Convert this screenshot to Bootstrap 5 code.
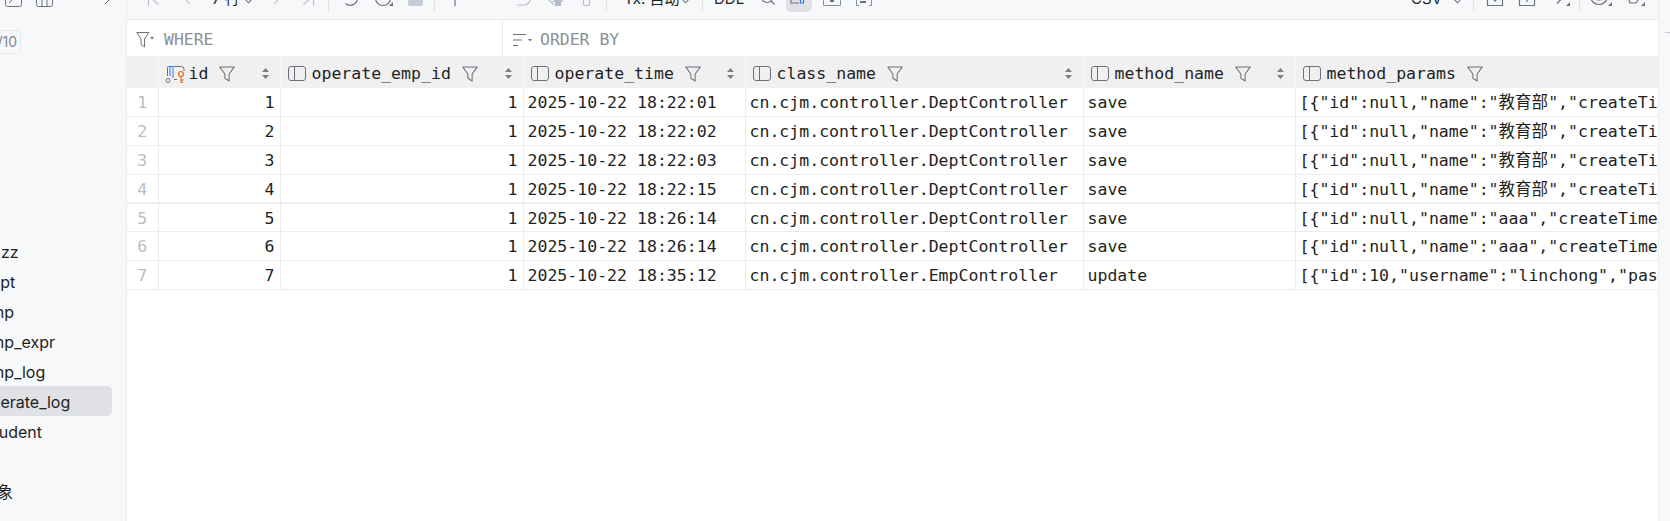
<!DOCTYPE html>
<html lang="en">
<head>
    <meta charset="UTF-8">
    <meta name="viewport" content="width=device-width, initial-scale=1.0">
    <title>operate_log</title>
    <link href="https://cdn.jsdelivr.net/npm/bootstrap@5.3.0/dist/css/bootstrap.min.css" rel="stylesheet">
    <style>
        html, body { height: 100%; overflow: hidden; }
        body { background: #fff; color: #1e1f22; font-family: Inter, "Noto Sans CJK SC", sans-serif; }
        svg { display: block; flex: none; overflow: visible; }

        /* shell */
        .side-pane { width: 127px; background: #f7f8fa; border-right: 1px solid #ebecf0; overflow: hidden; }
        .main-pane { width: 1531px; }
        .rail-pane { width: 12px; background: #f7f8fa; border-left: 1px solid #ebecf0; }
        .rail-tick { width: 6px; height: 1px; background: #c9ccd6; margin: 32px 0 0 6px; }

        /* clipped toolbar along the top */
        .tool-bar { height: 20px; background: #f7f8fa; border-bottom: 1px solid #ebecf0; overflow: hidden; align-items: flex-end; }
        .side-pane .tool-bar { border-bottom: 0; }
        .tool { display: flex; justify-content: center; padding-bottom: 13px; flex: none; }
        .tool.tool-chev { padding-bottom: 15px; }
        .tool-text { font-size: 15px; line-height: 18px; padding-bottom: 11px; flex: none; }
        .tool-sep { width: 1px; height: 12px; background: #dfe1e5; margin-bottom: 8px; flex: none; }
        .tool.tool-on { background: #dfe1e5; border-radius: 5px; padding-bottom: 8px; height: 30px; align-items: flex-end; margin-bottom: 7px; }
        .tw23 { width: 23px; } .tw24 { width: 24px; } .tw26 { width: 26px; }
        .tw31 { width: 31px; } .tw32 { width: 32px; } .tw33 { width: 33px; } .tw34 { width: 34px; }
        .tw37 { width: 37px; } .tw39 { width: 39px; } .tw40 { width: 40px; } .tw41 { width: 41px; }
        .tw42 { width: 42px; } .tw45 { width: 45px; }
        .tool-lead { padding-left: 10px; }
        .tool-right { padding-right: 10px; }
        .txt-rows { margin-left: 9px; width: 20px; white-space: nowrap; }
        .txt-tx { margin-left: 17px; width: 45px; white-space: nowrap; }
        .txt-ddl { margin-left: 11px; width: 27px; }
        .tool-search { justify-content: flex-end; padding-right: 11px; }
        .side-tools .tool:first-child { margin-left: 5px; width: 17px; }
        .side-tools .tool:nth-child(2) { margin-left: 14px; width: 17px; }
        .side-tools .tool:nth-child(3) { margin-left: 52px; width: 5px; }

        /* sidebar */
        .page-count { width: 41px; height: 24px; margin: 10px 0 0 -20px; border: 1px solid #e6e7eb; border-radius: 4px; color: #818594; font-size: 14px; line-height: 22px; text-align: right; padding-right: 3px; }
        .tree-list { margin-top: 182px; }
        .tree-row { height: 30px; line-height: 32px; font-size: 16px; white-space: nowrap; width: 112px; overflow: hidden; border-radius: 0 5px 5px 0; }
        .tree-row.is-on { background: #dfe1e5; }
        .cut-0 { margin-left: 1px; } .cut-emp { margin-left: -19px; } .cut-dept { margin-left: -19px; }
        .cut-op { margin-left: -19px; } .cut-st { margin-left: -15px; } .cut-cn { margin-left: -19px; }
        .tree-gap { height: 30px; }

        /* where / order by */
        .filter-bar { height: 36px; font-family: "DejaVu Sans Mono", "Noto Sans CJK SC", monospace; font-size: 16.45px; color: #8c8f96; }
        .filter-where { width: 376px; border-right: 1px solid #ebecf0; padding: 3px 0 0 9px; gap: 10px; }
        .filter-order { padding: 3px 0 0 10px; gap: 8px; }
        .filter-bar span { padding-top: 2px; }

        /* grid */
        .grid-wrap { overflow: hidden; width: 1531px; }
        .log-grid { table-layout: fixed; width: 1531px; margin: 0; font-family: "DejaVu Sans Mono", "Noto Sans CJK SC", monospace; font-size: 16.55px; border-collapse: collapse; }
        .log-grid th, .log-grid td { padding: 3px 5px 0 4px; height: 29px; line-height: 20px; border: 0 solid #ebecf0; border-width: 0 1px 1px 0; white-space: nowrap; overflow: hidden; color: #1e1f22; box-shadow: none; vertical-align: middle; font-weight: 400; }
        .log-grid th { height: 32px; background: #f0f0f1; border-color: #f7f7f8; border-bottom: 0; padding: 3px 0 0 7px; }
        .log-grid tbody tr:first-child td { height: 28px; }
        .log-grid tbody tr:nth-child(4) td { border-bottom-width: 2px; }
        .log-grid tbody tr:nth-child(5) td { height: 28px; }
        .log-grid td.row-no { color: #b9bdc9; text-align: center; padding: 3px 0 0; }
        .log-grid th:last-child, .log-grid td:last-child { border-right: 0; }
        .c-no { width: 31px; } .c-id { width: 122px; } .c-emp { width: 243px; } .c-time { width: 222px; }
        .c-class { width: 338px; } .c-method { width: 212px; } .c-params { width: 363px; }
        .head-in { display: flex; align-items: center; }
        .head-in > span { margin-left: 6px; }
        .head-in .head-filter { margin-left: 11px; }
        .head-in .head-sort { margin-left: auto; margin-right: 11px; }
        .head-in.head-id { margin-left: -1px; }
        .head-id > span { margin-left: 3px; }
    </style>
</head>
<body>
<svg width="0" height="0" class="position-absolute">
    <defs>
        <symbol id="i-col" viewBox="0 0 18 15"><rect x=".5" y=".5" width="17" height="14" rx="2.5" fill="none" stroke="#6c707e"/><path d="M6.5 .5v14" stroke="#6c707e" fill="none"/></symbol>
        <symbol id="i-key" viewBox="0 0 21 18">
            <path d="M8.500 1.500h8a2.500 2.500 0 0 1 2.500 2.500v2M9 14.500h3" fill="none" stroke="#6c707e"/>
            <path d="M2.500 11V2.500a1 1 0 0 1 1-1h4.500V13M5 1.500V11" fill="none" stroke="#3574f0"/>
            <circle cx="3" cy="15.500" r="2" fill="none" stroke="#6c707e"/>
            <circle cx="16" cy="9" r="2.500" fill="none" stroke="#e66d17" stroke-width="1.2"/>
            <path d="M16 11.500v6M16 15h3M16 17.500h2" fill="none" stroke="#e66d17" stroke-width="1.2"/>
        </symbol>
        <symbol id="i-funnel" viewBox="0 0 15 15"><path d="M.8 1h13.400L9.500 7.500v6.600L5.500 11.500v-4z" fill="none" stroke="#6c707e" stroke-linejoin="round"/></symbol>
        <symbol id="i-sort" viewBox="0 0 7 11"><path d="M3.500 0L7 4H0zM3.500 11L0 7h7z" fill="#7a7e8a"/></symbol>
        <symbol id="i-chev" viewBox="0 0 10 6"><path d="M1 .8L5 5l4-4.200" fill="none" stroke="#6c707e" stroke-width="1.2"/></symbol>
    </defs>
</svg>

<div class="d-flex h-100">
    <aside class="side-pane flex-shrink-0">
        <div class="tool-bar side-tools d-flex">
            <div class="tool"><svg width="17" height="16" viewBox="0 0 17 16"><rect x=".5" y=".5" width="16" height="15" rx="2" fill="none" stroke="#6c707e"/><path d="M4 12l5-5" stroke="#6c707e"/></svg></div>
            <div class="tool"><svg width="17" height="16" viewBox="0 0 17 16"><rect x=".5" y=".5" width="16" height="15" rx="2" fill="none" stroke="#6c707e"/><path d="M6 .5v15M11 .5v15" stroke="#6c707e"/></svg></div>
            <div class="tool"><svg width="5" height="16" viewBox="0 0 5 16"><path d="M0 13l5-5" fill="none" stroke="#6c707e"/></svg></div>
        </div>
        <div class="page-count">1/10</div>
        <div class="tree-list">
            <div class="tree-row"><div class="cut-0">zz</div></div>
            <div class="tree-row"><div class="cut-dept">dept</div></div>
            <div class="tree-row"><div class="cut-emp">emp</div></div>
            <div class="tree-row"><div class="cut-emp">emp_expr</div></div>
            <div class="tree-row"><div class="cut-emp">emp_log</div></div>
            <div class="tree-row is-on"><div class="cut-op">operate_log</div></div>
            <div class="tree-row"><div class="cut-st">student</div></div>
            <div class="tree-gap"></div>
            <div class="tree-row"><div class="cut-cn">对象</div></div>
        </div>
    </aside>

    <main class="main-pane flex-shrink-0 d-flex flex-column">
        <div class="tool-bar d-flex tool-lead tool-right">
            <div class="tool tw33"><svg width="11" height="16" viewBox="0 0 11 16"><path d="M.5 2v14M10.500 14.500L3 8l7.500-6.500" fill="none" stroke="#b9bdc9" stroke-width="1.1"/></svg></div>
            <div class="tool tw33"><svg width="6" height="16" viewBox="0 0 6 16"><path d="M6 14L0 7.500 6 1" fill="none" stroke="#b9bdc9" stroke-width="1.1"/></svg></div>
            <div class="tool-text txt-rows">7 行</div>
            <div class="tool tool-chev tw33"><svg width="9" height="6"><use href="#i-chev"/></svg></div>
            <div class="tool tw23"><svg width="6" height="16" viewBox="0 0 6 16"><path d="M0 14l6-6.500L0 1" fill="none" stroke="#b9bdc9" stroke-width="1.1"/></svg></div>
            <div class="tool tw40"><svg width="11" height="16" viewBox="0 0 11 16"><path d="M10.500 2v14M.5 14.500L8 8 .5 1.500" fill="none" stroke="#b9bdc9" stroke-width="1.1"/></svg></div>
            <div class="tool-sep"></div>
            <div class="tool tw42"><svg width="16" height="16" viewBox="0 0 16 16"><path d="M3.500 13.500a7 7 0 1 0-1-9" fill="none" stroke="#6c707e" stroke-width="1.2"/></svg></div>
            <div class="tool tw26"><svg width="18" height="16" viewBox="0 0 18 16"><circle cx="8" cy="8" r="7.500" fill="none" stroke="#6c707e" stroke-width="1.2"/><path d="M8 4v5" stroke="#6c707e"/><path d="M18 12v4h-4z" fill="#6c707e"/></svg></div>
            <div class="tool tw37"><svg width="15" height="16" viewBox="0 0 15 16"><rect width="15" height="16" rx="2" fill="#c9ccd6"/></svg></div>
            <div class="tool-sep"></div>
            <div class="tool tw40"><svg width="2" height="16" viewBox="0 0 2 16"><path d="M1 0v16" stroke="#6c707e" stroke-width="1.2"/></svg></div>
            <div class="tool tw32"></div>
            <div class="tool tw34"><svg width="14" height="16" viewBox="0 0 14 16"><path d="M0 15h7a6 6 0 0 0 6-6V0" fill="none" stroke="#b9bdc9" stroke-width="1.2"/></svg></div>
            <div class="tool tw26"><svg width="20" height="16" viewBox="0 0 20 16"><path d="M1 6l9 9" fill="none" stroke="#b9bdc9" stroke-width="1.2"/><path d="M14 7l6 5h-3v4h-6v-4H8z" fill="#b9bdc9"/></svg></div>
            <div class="tool tw39"><svg width="7" height="16" viewBox="0 0 7 16"><path d="M.5 0v14a1.500 1.500 0 0 0 1.500 1.500h3a1.500 1.500 0 0 0 1.500-1.500V0" fill="none" stroke="#b9bdc9" stroke-width="1.2"/></svg></div>
            <div class="tool-sep"></div>
            <div class="tool-text txt-tx">Tx: 自动</div>
            <div class="tool tool-chev tw33"><svg width="9" height="6"><use href="#i-chev"/></svg></div>
            <div class="tool-sep"></div>
            <div class="tool-text txt-ddl">DDL</div>
            <div class="tool tw45 tool-search"><svg width="14" height="16" viewBox="0 0 14 16"><circle cx="6" cy="7" r="5.500" fill="none" stroke="#6c707e" stroke-width="1.2"/><path d="M10 11l3.500 3.500" stroke="#6c707e" stroke-width="1.2"/></svg></div>
            <div class="tool tw26 tool-on"><svg width="18" height="16" viewBox="0 0 18 16"><path d="M1 4v11h8M1 4h10" fill="none" stroke="#6c707e" stroke-width="1.2"/><path d="M6 5h12l-4.500 5v5h-3v-5z" fill="#e3ebfa" stroke="#3574f0" stroke-width="1.2"/></svg></div>
            <div class="tool tw40"><svg width="18" height="16" viewBox="0 0 18 16"><path d="M.5 4v11.500h17V4" fill="none" stroke="#8a8e9b"/><rect x="7" y="9" width="4" height="3" fill="#6c707e"/></svg></div>
            <div class="tool tw24"><svg width="16" height="16" viewBox="0 0 16 16"><path d="M3 15.500H.5V10M13 15.500h2.500V10" fill="none" stroke="#8a8e9b"/><rect x="4" y="11" width="6" height="2" fill="#6c707e"/></svg></div>
            <div class="tool-text ms-auto">CSV</div>
            <div class="tool tool-chev tw31"><svg width="9" height="6"><use href="#i-chev"/></svg></div>
            <div class="tool-sep"></div>
            <div class="tool tw41"><svg width="16" height="16" viewBox="0 0 16 16"><path d="M.5 9v6.500h15V9" fill="none" stroke="#6c707e" stroke-width="1.2"/><path d="M4 7h8l-4 5z" fill="#6c707e"/></svg></div>
            <div class="tool tw24"><svg width="16" height="16" viewBox="0 0 16 16"><path d="M.5 9v6.500h15V9" fill="none" stroke="#6c707e" stroke-width="1.2"/><path d="M8 5v7" stroke="#6c707e" stroke-width="1.2"/></svg></div>
            <div class="tool tw40"><svg width="21" height="16" viewBox="0 0 21 16"><path d="M0 8h13M8 2.500L13.500 8 8 13.500" fill="none" stroke="#6c707e" stroke-width="1.2"/><path d="M21 12v4h-4z" fill="#6c707e"/></svg></div>
            <div class="tool-sep"></div>
            <div class="tool tw42"><svg width="22" height="16" viewBox="0 0 22 16"><circle cx="9" cy="6" r="8.500" fill="none" stroke="#6c707e" stroke-width="1.2"/><circle cx="9" cy="6" r="4" fill="none" stroke="#6c707e" stroke-width="1.2"/><path d="M22 12v4h-4z" fill="#6c707e"/></svg></div>
            <div class="tool tw26"><svg width="20" height="16" viewBox="0 0 20 16"><path d="M1 5l3 5 1 3h6l2-3 3-5" fill="none" stroke="#6c707e" stroke-width="1.2"/><circle cx="8" cy="7" r="2.500" fill="none" stroke="#6c707e" stroke-width="1.2"/><path d="M20 12v4h-4z" fill="#6c707e"/></svg></div>
        </div>

        <div class="filter-bar d-flex">
            <div class="filter-where d-flex align-items-center">
                <svg width="18" height="18" viewBox="0 0 18 18"><path d="M.8 1.500h12L8.500 8v8L5 13.500V8z" fill="none" stroke="#6c707e" stroke-linejoin="round"/><path d="M14 6h4l-2 2.500z" fill="#6c707e"/></svg>
                <span>WHERE</span>
            </div>
            <div class="filter-order flex-grow-1 d-flex align-items-center">
                <svg width="19" height="14" viewBox="0 0 19 14"><path d="M0 1.500h13M0 7h9M0 12.500h5" fill="none" stroke="#6c707e" stroke-width="1.1"/><path d="M15 6h4l-2 2.500z" fill="#6c707e"/></svg>
                <span>ORDER BY</span>
            </div>
        </div>

        <div class="grid-wrap">
            <table class="table log-grid">
                <colgroup>
                    <col class="c-no"><col class="c-id"><col class="c-emp"><col class="c-time"><col class="c-class"><col class="c-method"><col class="c-params">
                </colgroup>
                <thead>
                    <tr>
                        <th></th>
                        <th><div class="head-in head-id"><svg width="21" height="18"><use href="#i-key"/></svg><span>id</span><svg class="head-filter" width="16" height="16"><use href="#i-funnel"/></svg><svg class="head-sort" width="7" height="11"><use href="#i-sort"/></svg></div></th>
                        <th><div class="head-in"><svg width="18" height="15"><use href="#i-col"/></svg><span>operate_emp_id</span><svg class="head-filter" width="16" height="16"><use href="#i-funnel"/></svg><svg class="head-sort" width="7" height="11"><use href="#i-sort"/></svg></div></th>
                        <th><div class="head-in"><svg width="18" height="15"><use href="#i-col"/></svg><span>operate_time</span><svg class="head-filter" width="16" height="16"><use href="#i-funnel"/></svg><svg class="head-sort" width="7" height="11"><use href="#i-sort"/></svg></div></th>
                        <th><div class="head-in"><svg width="18" height="15"><use href="#i-col"/></svg><span>class_name</span><svg class="head-filter" width="16" height="16"><use href="#i-funnel"/></svg><svg class="head-sort" width="7" height="11"><use href="#i-sort"/></svg></div></th>
                        <th><div class="head-in"><svg width="18" height="15"><use href="#i-col"/></svg><span>method_name</span><svg class="head-filter" width="16" height="16"><use href="#i-funnel"/></svg><svg class="head-sort" width="7" height="11"><use href="#i-sort"/></svg></div></th>
                        <th><div class="head-in"><svg width="18" height="15"><use href="#i-col"/></svg><span>method_params</span><svg class="head-filter" width="16" height="16"><use href="#i-funnel"/></svg></div></th>
                    </tr>
                </thead>
                <tbody>
                    <tr><td class="row-no">1</td><td class="text-end">1</td><td class="text-end">1</td><td>2025-10-22 18:22:01</td><td>cn.cjm.controller.DeptController</td><td>save</td><td>[{"id":null,"name":"教育部","createTime":"2025-10-22</td></tr>
                    <tr><td class="row-no">2</td><td class="text-end">2</td><td class="text-end">1</td><td>2025-10-22 18:22:02</td><td>cn.cjm.controller.DeptController</td><td>save</td><td>[{"id":null,"name":"教育部","createTime":"2025-10-22</td></tr>
                    <tr><td class="row-no">3</td><td class="text-end">3</td><td class="text-end">1</td><td>2025-10-22 18:22:03</td><td>cn.cjm.controller.DeptController</td><td>save</td><td>[{"id":null,"name":"教育部","createTime":"2025-10-22</td></tr>
                    <tr><td class="row-no">4</td><td class="text-end">4</td><td class="text-end">1</td><td>2025-10-22 18:22:15</td><td>cn.cjm.controller.DeptController</td><td>save</td><td>[{"id":null,"name":"教育部","createTime":"2025-10-22</td></tr>
                    <tr><td class="row-no">5</td><td class="text-end">5</td><td class="text-end">1</td><td>2025-10-22 18:26:14</td><td>cn.cjm.controller.DeptController</td><td>save</td><td>[{"id":null,"name":"aaa","createTime":"2025-10-22</td></tr>
                    <tr><td class="row-no">6</td><td class="text-end">6</td><td class="text-end">1</td><td>2025-10-22 18:26:14</td><td>cn.cjm.controller.DeptController</td><td>save</td><td>[{"id":null,"name":"aaa","createTime":"2025-10-22</td></tr>
                    <tr><td class="row-no">7</td><td class="text-end">7</td><td class="text-end">1</td><td>2025-10-22 18:35:12</td><td>cn.cjm.controller.EmpController</td><td>update</td><td>[{"id":10,"username":"linchong","password":"123456"</td></tr>
                </tbody>
            </table>
        </div>
    </main>

    <div class="rail-pane flex-shrink-0"><div class="rail-tick"></div></div>
</div>

<script src="https://cdn.jsdelivr.net/npm/bootstrap@5.3.0/dist/js/bootstrap.bundle.min.js"></script>
</body>
</html>
